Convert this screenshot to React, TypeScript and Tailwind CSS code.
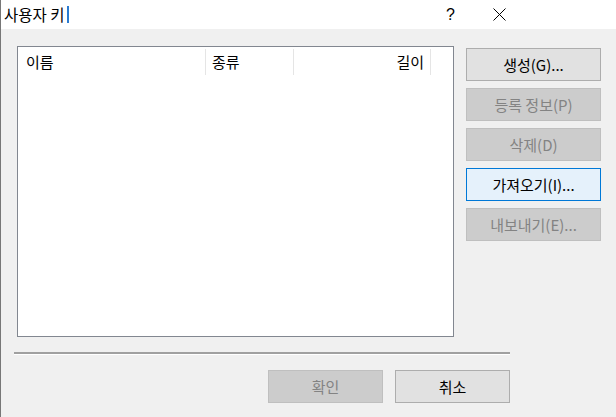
import React from "react";

const font = { fontFamily: '"Noto Sans CJK KR", "Noto Sans", sans-serif' };

function Btn({
  children,
  kind,
  className = "",
}: {
  children: React.ReactNode;
  kind: "normal" | "disabled" | "focus";
  className?: string;
}) {
  const k =
    kind === "normal"
      ? "bg-[#e1e1e1] border-[#adadad] text-black"
      : kind === "disabled"
      ? "bg-[#cccccc] border-[#bfbfbf] text-[#838383]"
      : "bg-[#e5f1fb] border-[#0078d7] text-black";
  return (
    <div
      className={`flex items-center justify-center border h-[33px] text-[15px] leading-none ${k} ${className}`}
    >
      {children}
    </div>
  );
}

export default function App() {
  return (
    <div
      className="w-[616px] h-[417px] bg-[#f0f0f0] border-l border-[#777777] flex flex-col overflow-hidden"
      style={font}
    >
      <div className="h-[29px] bg-white flex items-center shrink-0">
        <div className="ml-[3px] flex items-center text-[15.5px] text-black">
          <span>사용자 키</span>
          <span className="ml-[2px] w-[2px] h-[17px] bg-[#2b7bd0]" />
        </div>
        <div className="ml-auto flex items-center">
          <span className="text-[16px] text-black mr-[38px]" style={{ fontFamily: '"Liberation Sans", sans-serif' }}>?</span>
          <svg width="13" height="13" viewBox="0 0 13 13" className="mr-[110px]">
            <path d="M0.5 0.5 L12.5 12.5 M12.5 0.5 L0.5 12.5" stroke="#000" strokeWidth="1" fill="none" />
          </svg>
        </div>
      </div>
      <div className="flex mt-[17px] ml-[16px]">
        <div className="w-[437px] h-[291px] bg-white border border-[#828790]">
          <div className="flex h-[28px] text-[15px] text-black">
            <div className="w-[188px] flex items-center pl-[8px] border-r border-[#e5e5e5] mt-[2px]">
              이름
            </div>
            <div className="w-[88px] flex items-center pl-[6px] border-r border-[#e5e5e5] mt-[2px]">
              종류
            </div>
            <div className="w-[137px] flex items-center justify-end pr-[6px] border-r border-[#e5e5e5] mt-[2px]">
              길이
            </div>
          </div>
        </div>
        <div className="ml-[12px] mt-[2px] flex flex-col gap-[7px] w-[135px]">
          <Btn kind="normal">생성(G)...</Btn>
          <Btn kind="disabled">등록 정보(P)</Btn>
          <Btn kind="disabled">삭제(D)</Btn>
          <Btn kind="focus">가져오기(I)...</Btn>
          <Btn kind="disabled">내보내기(E)...</Btn>
        </div>
      </div>
      <div className="ml-[13px] mt-[15px] w-[496px] h-[3px] border-t-2 border-[#a0a0a0] border-b border-b-white" />
      <div className="ml-[13px] mt-[15px] w-[496px] flex justify-end gap-[12px]">
        <Btn kind="disabled" className="w-[115px]">확인</Btn>
        <Btn kind="normal" className="w-[115px]">취소</Btn>
      </div>
    </div>
  );
}
